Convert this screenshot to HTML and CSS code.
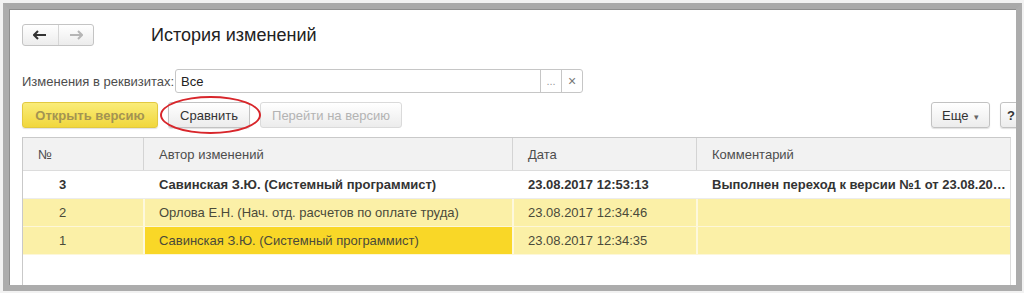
FILE: index.html
```html
<!DOCTYPE html>
<html>
<head>
    <meta charset="utf-8">
    <title>История изменений</title>
    <link rel="stylesheet" href="styles.css">
</head>
<body>
    <div class="window">
        <div class="header">
            <div class="nav">
                <button class="nav-btn">
                    <svg width="14" height="10" viewBox="0 0 14 10"><path d="M1 5h12M5 1L1 5l4 4" stroke="#333" stroke-width="2" fill="none"/></svg>
                </button>
                <button class="nav-btn">
                    <svg width="14" height="10" viewBox="0 0 14 10"><path d="M1 5h12M9 1l4 4-4 4" stroke="#b5b5b5" stroke-width="2" fill="none"/></svg>
                </button>
            </div>
            <h1 class="title">История изменений</h1>
        </div>

        <div class="filter">
            <label class="filter-label">Изменения в реквизитах:</label>
            <div class="field">
                <span class="field-value">Все</span>
                <span class="field-btn dots">...</span>
                <span class="field-btn clear">×</span>
            </div>
        </div>

        <div class="toolbar">
            <button class="btn btn-yellow">Открыть версию</button>
            <span class="marked"><button class="btn">Сравнить</button></span>
            <button class="btn btn-disabled">Перейти на версию</button>
            <div class="spacer"></div>
            <button class="btn btn-more">Еще <span class="caret">▾</span></button>
            <button class="btn btn-help">?</button>
        </div>

        <div class="grid">
            <div class="row row-head">
                <div class="cell c-num">№</div>
                <div class="cell c-author">Автор изменений</div>
                <div class="cell c-date">Дата</div>
                <div class="cell c-comment">Комментарий</div>
            </div>
            <div class="row row-bold">
                <div class="cell c-num">3</div>
                <div class="cell c-author">Савинская З.Ю. (Системный программист)</div>
                <div class="cell c-date">23.08.2017 12:53:13</div>
                <div class="cell c-comment">Выполнен переход к версии №1 от 23.08.2017 12:34:35</div>
            </div>
            <div class="row row-yellow">
                <div class="cell c-num">2</div>
                <div class="cell c-author">Орлова Е.Н. (Нач. отд. расчетов по оплате труда)</div>
                <div class="cell c-date">23.08.2017 12:34:46</div>
                <div class="cell c-comment"></div>
            </div>
            <div class="row row-yellow">
                <div class="cell c-num">1</div>
                <div class="cell c-author selected">Савинская З.Ю. (Системный программист)</div>
                <div class="cell c-date">23.08.2017 12:34:35</div>
                <div class="cell c-comment"></div>
            </div>
        </div>
    </div>
</body>
</html>
```

FILE: styles.css
```css
body {
    margin: 0;
    background: #f2f2f2;
    font-family: "Liberation Sans", Arial, sans-serif;
    font-size: 13px;
    color: #333;
}

.window {
    box-sizing: border-box;
    margin: 3px 2px 0 3px;
    width: 1019px;
    height: 288px;
    border: 6px solid #acacac;
    border-top-color: #a9a9a9;
    box-shadow: inset 1px 1px 0 #8e8e8e;
    background: #fff;
    overflow: hidden;
    padding: 15px 0 0 13px;
}

.header {
    display: flex;
    align-items: center;
    height: 22px;
}

.nav {
    display: flex;
    width: 72px;
    height: 22px;
    box-sizing: border-box;
    border: 1px solid #c4c4c4;
    border-radius: 3px;
    background: linear-gradient(#fff, #ececec);
}

.nav-btn {
    flex: 1;
    border: none;
    background: none;
    padding: 0;
    display: flex;
    align-items: center;
    justify-content: center;
}

.nav-btn + .nav-btn {
    border-left: 1px solid #d6d6d6;
}

.title {
    margin: 0 0 0 57px;
    font-size: 18px;
    font-weight: normal;
    color: #222;
}

.filter {
    display: flex;
    align-items: center;
    margin-top: 23px;
    height: 24px;
}

.filter-label {
    width: 153px;
    color: #4d4d4d;
}

.field {
    display: flex;
    width: 408px;
    height: 24px;
    box-sizing: border-box;
    border: 1px solid #c6c6c6;
    border-radius: 3px;
}

.field-value {
    flex: 1;
    padding: 4px 5px 0;
    color: #222;
}

.field-btn {
    width: 20px;
    border-left: 1px solid #c6c6c6;
    text-align: center;
    color: #999;
    font-size: 11px;
    line-height: 22px;
}

.field-btn.clear {
    font-size: 14px;
    color: #777;
}

.toolbar {
    display: flex;
    align-items: center;
    margin-top: 9px;
    height: 26px;
    gap: 10px;
}

.btn {
    height: 26px;
    box-sizing: border-box;
    padding: 0 12px;
    border: 1px solid #c2c2c2;
    border-radius: 3px;
    background: linear-gradient(#fff, #ececec);
    font-family: inherit;
    font-size: 13px;
    color: #333;
    white-space: nowrap;
    box-shadow: 0 1px 1px rgba(0, 0, 0, 0.12);
}

.btn-yellow {
    width: 136px;
    padding: 0;
    border-color: #e2c940;
    background: linear-gradient(#faec79, #f1d73c);
    color: #a39352;
    font-weight: bold;
}

.btn-disabled {
    width: 142px;
    padding: 0;
    color: #b3b3b3;
    border-color: #dadada;
    box-shadow: none;
}

.marked {
    position: relative;
    display: inline-flex;
}

.marked .btn {
    width: 82px;
    padding: 0;
}

.marked::after {
    content: "";
    position: absolute;
    left: -8px;
    top: -6px;
    width: 97px;
    height: 34px;
    border: 2px solid #d8262b;
    border-radius: 50%;
}

.spacer {
    flex: 1;
}

.btn-more {
    width: 59px;
    padding: 0;
}

.btn-help {
    width: 24px;
    padding: 0 0 0 6px;
    text-align: left;
    margin-right: -8px;
    flex-shrink: 0;
    font-weight: bold;
}

.caret {
    font-size: 9px;
    color: #666;
    margin-left: 2px;
}

.grid {
    margin-top: 9px;
    width: 989px;
    height: 160px;
    box-sizing: border-box;
    border-left: 1px solid #c9c9c9;
    border-top: 1px solid #c9c9c9;
    border-right: 1px solid #dcdcdc;
}

.row {
    display: flex;
    height: 28px;
    box-sizing: border-box;
    border-bottom: 1px solid #ececec;
}

.row-head {
    height: 33px;
    background: #f2f2f2;
    border-bottom: 1px solid #dcdcdc;
    color: #4d4d4d;
}

.cell {
    box-sizing: border-box;
    padding-left: 16px;
    display: flex;
    align-items: center;
    white-space: nowrap;
    overflow: hidden;
}

.c-num {
    width: 120px;
}

.row-head .c-num {
    padding-left: 15px;
}

.row:not(.row-head) .c-num {
    padding-left: 36px;
}

.c-author {
    width: 369px;
}

.c-date {
    width: 184px;
}

.c-comment {
    flex: 1;
}

.row-head .cell + .cell {
    border-left: 1px solid #d4d4d4;
    padding-left: 15px;
}

.row-bold {
    font-weight: bold;
    color: #333;
}

.row-bold .c-comment {
    text-overflow: ellipsis;
    display: block;
    line-height: 27px;
    padding-right: 4px;
}

.row-yellow {
    background: #fbf0a7;
    border-bottom-color: #fdf7d8;
    color: #4a4a3a;
}

.row-yellow .cell + .cell {
    border-left: 2px solid #fdf8dc;
    padding-left: 14px;
}

.selected {
    background: #f9d727;
}
```
